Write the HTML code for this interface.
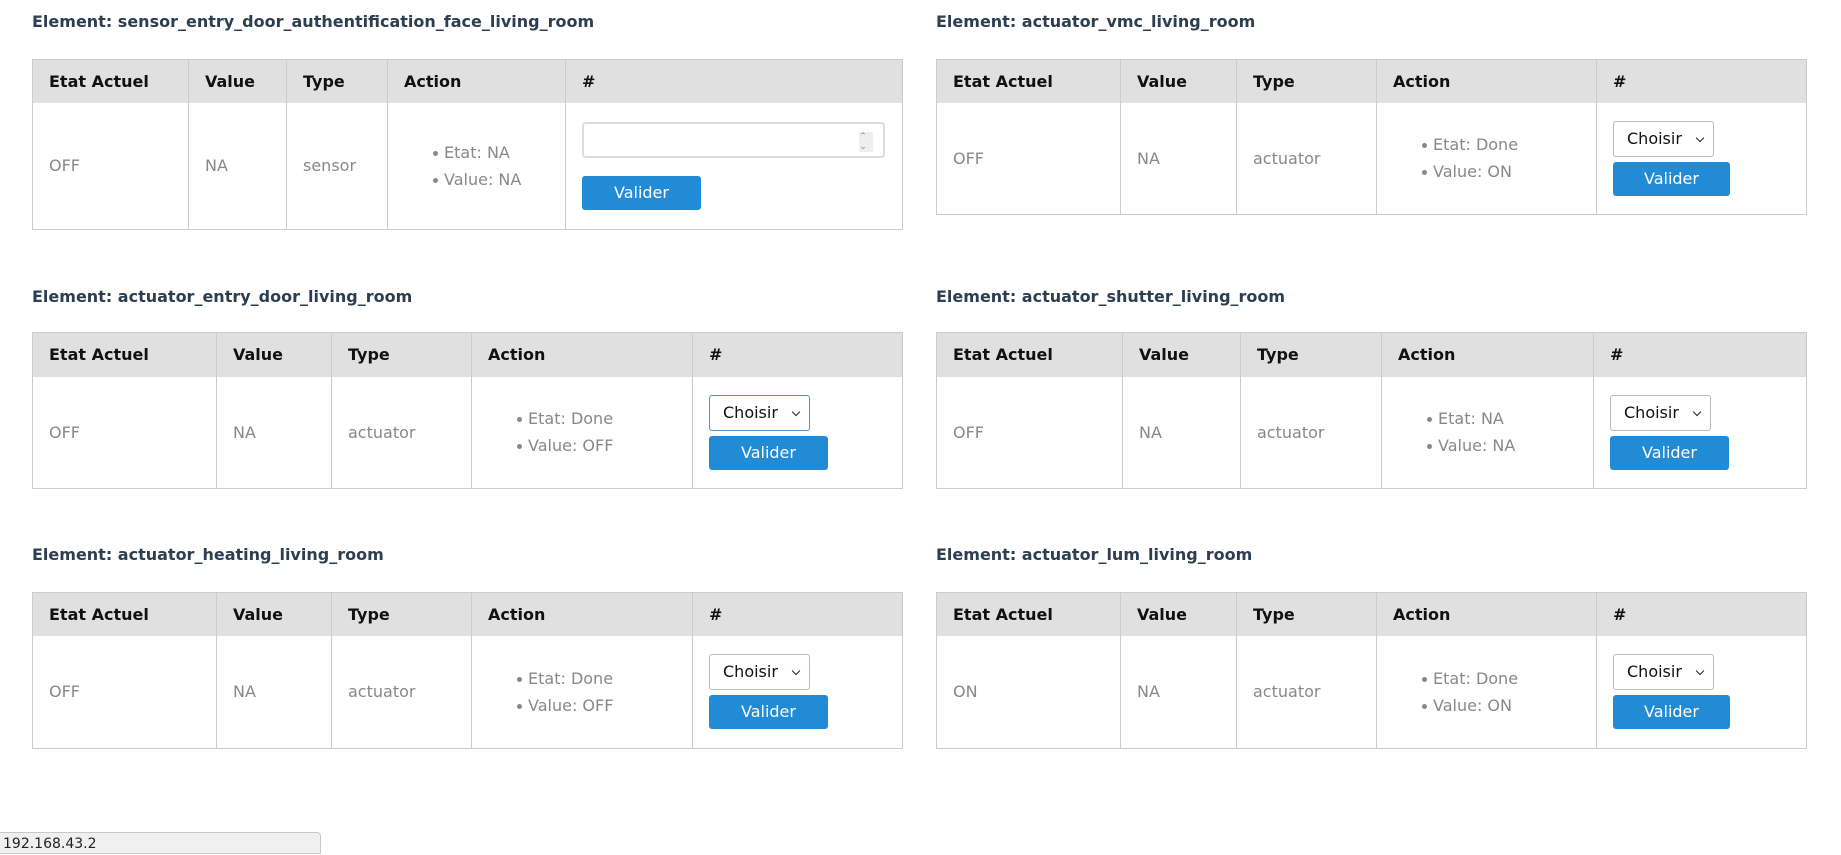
<!DOCTYPE html>
<html><head><meta charset="utf-8"><style>
*{box-sizing:border-box}
body{margin:0;width:1841px;height:848px;background:#fff;font-family:"DejaVu Sans","Liberation Sans",sans-serif;position:relative;overflow:hidden}
h4{position:absolute;margin:0;font-size:16px;font-weight:bold;color:#2c3e50;line-height:20px}
table{position:absolute;border-collapse:collapse;table-layout:fixed;border:1px solid #ccc;font-size:16px}
th{background:#e0e0e0;text-align:left;padding:0 16px;font-weight:bold;color:#111;border-left:1px solid #ccc}
td{color:#888;padding:0 16px;border-left:1px solid #ccc;vertical-align:middle}
ul{margin:0;padding-left:40px;line-height:27px;list-style:none}
li{position:relative}
li:before{content:"";position:absolute;left:-11px;top:12px;width:5px;height:5px;border-radius:50%;background:#888}
.btn{display:block;background:#228bd6;color:#fff;border-radius:3px;text-align:center;line-height:34px;height:34px;font-size:16px}
.sel{display:block;height:36px;width:101px;border:1px solid #bbb;border-radius:3px;color:#111;line-height:34px;padding-left:13px;font-size:16px;position:relative;margin-bottom:5px}
.sel:after{content:"";position:absolute;right:10px;top:13px;width:5px;height:5px;border-right:1.5px solid #222;border-bottom:1.5px solid #222;transform:rotate(45deg)}
.inp{display:block;height:36px;width:303px;border:2px solid #ddd;border-radius:4px;margin-bottom:18px;position:relative}
.inp:after{content:"⌃⌄";position:absolute;right:10px;top:8px;font-size:9px;color:#888;background:#eee;width:14px;line-height:8px;writing-mode:vertical-lr;text-align:center}
</style></head><body>

<h4 style="left:32px;top:12px">Element: sensor_entry_door_authentification_face_living_room</h4>
<table style="left:32px;top:59px;width:871px">
<colgroup><col style="width:156px"><col style="width:98px"><col style="width:101px"><col style="width:178px"><col></colgroup>
<tr style="height:43px"><th>Etat Actuel</th><th>Value</th><th>Type</th><th>Action</th><th>#</th></tr>
<tr style="height:127px"><td>OFF</td><td>NA</td><td>sensor</td><td><ul><li>Etat: NA</li><li>Value: NA</li></ul></td><td><span class="inp"></span><span class="btn" style="width:119px">Valider</span></td></tr>
</table>

<h4 style="left:936px;top:12px">Element: actuator_vmc_living_room</h4>
<table style="left:936px;top:59px;width:871px">
<colgroup><col style="width:184px"><col style="width:116px"><col style="width:140px"><col style="width:220px"><col></colgroup>
<tr style="height:43px"><th>Etat Actuel</th><th>Value</th><th>Type</th><th>Action</th><th>#</th></tr>
<tr style="height:112px"><td>OFF</td><td>NA</td><td>actuator</td><td><ul><li>Etat: Done</li><li>Value: ON</li></ul></td><td><span class="sel">Choisir</span><span class="btn" style="width:117px">Valider</span></td></tr>
</table>

<h4 style="left:32px;top:287px">Element: actuator_entry_door_living_room</h4>
<table style="left:32px;top:332px;width:871px">
<colgroup><col style="width:184px"><col style="width:115px"><col style="width:140px"><col style="width:221px"><col></colgroup>
<tr style="height:44px"><th>Etat Actuel</th><th>Value</th><th>Type</th><th>Action</th><th>#</th></tr>
<tr style="height:112px"><td>OFF</td><td>NA</td><td>actuator</td><td><ul><li>Etat: Done</li><li>Value: OFF</li></ul></td><td><span class="sel" style="border-color:#5a8fc9">Choisir</span><span class="btn" style="width:119px">Valider</span></td></tr>
</table>

<h4 style="left:936px;top:287px">Element: actuator_shutter_living_room</h4>
<table style="left:936px;top:332px;width:871px">
<colgroup><col style="width:186px"><col style="width:118px"><col style="width:141px"><col style="width:212px"><col></colgroup>
<tr style="height:44px"><th>Etat Actuel</th><th>Value</th><th>Type</th><th>Action</th><th>#</th></tr>
<tr style="height:112px"><td>OFF</td><td>NA</td><td>actuator</td><td><ul><li>Etat: NA</li><li>Value: NA</li></ul></td><td><span class="sel">Choisir</span><span class="btn" style="width:119px">Valider</span></td></tr>
</table>

<h4 style="left:32px;top:545px">Element: actuator_heating_living_room</h4>
<table style="left:32px;top:592px;width:871px">
<colgroup><col style="width:184px"><col style="width:115px"><col style="width:140px"><col style="width:221px"><col></colgroup>
<tr style="height:43px"><th>Etat Actuel</th><th>Value</th><th>Type</th><th>Action</th><th>#</th></tr>
<tr style="height:113px"><td>OFF</td><td>NA</td><td>actuator</td><td><ul><li>Etat: Done</li><li>Value: OFF</li></ul></td><td><span class="sel">Choisir</span><span class="btn" style="width:119px">Valider</span></td></tr>
</table>

<h4 style="left:936px;top:545px">Element: actuator_lum_living_room</h4>
<table style="left:936px;top:592px;width:871px">
<colgroup><col style="width:184px"><col style="width:116px"><col style="width:140px"><col style="width:220px"><col></colgroup>
<tr style="height:43px"><th>Etat Actuel</th><th>Value</th><th>Type</th><th>Action</th><th>#</th></tr>
<tr style="height:113px"><td>ON</td><td>NA</td><td>actuator</td><td><ul><li>Etat: Done</li><li>Value: ON</li></ul></td><td><span class="sel">Choisir</span><span class="btn" style="width:117px">Valider</span></td></tr>
</table>

<div style="position:absolute;left:0;top:832px;width:321px;height:22px;background:#f0f0f0;border:1px solid #c8c8c8;border-left:none;border-top-right-radius:4px;font-size:14px;color:#222;padding-left:3px;line-height:22px;font-family:'DejaVu Sans',sans-serif">192.168.43.2</div>
</body></html>
